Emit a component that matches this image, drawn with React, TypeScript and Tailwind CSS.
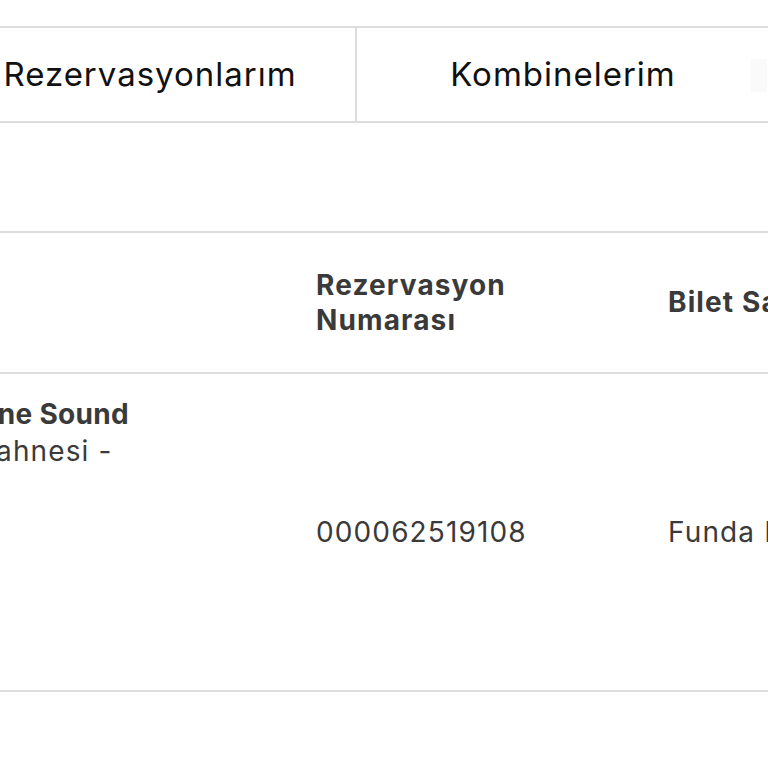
import React from "react";

export default function App() {
  return (
    <div className="w-[768px] h-[768px] overflow-hidden bg-white text-[#333]" style={{ fontFamily: "Inter, 'Noto Sans', sans-serif" }}>
      <div className="pt-[26px]">
        <div className="flex h-[97px] border-y-2 border-[#dcdcdc] -ml-[55px] w-[1300px]">
          <div className="w-[412px] shrink-0 border-r-2 border-[#dcdcdc] flex items-center justify-center text-[33px] tracking-[0.03em] text-[#111]">
            Rezervasyonlarım
          </div>
          <div className="w-[394px] shrink-0 flex items-center justify-center pl-[18px] text-[33px] tracking-[0.03em] text-[#111]">
            Kombinelerim
          </div>
          <div className="w-[412px] shrink-0 flex items-center pt-[2px]">
            <div className="w-[16px] h-[33px] bg-[#fafafa]" />
          </div>
        </div>
      </div>

      <div className="mt-[108px] border-t-2 border-[#dcdcdc] w-[1200px]">
        <div className="flex h-[141px] border-b-2 border-[#dcdcdc] font-bold text-[28px] tracking-[0.04em] leading-[35px] text-[#3a3a3a]">
          <div className="w-[300px] shrink-0" />
          <div className="w-[352px] shrink-0 pl-[16px] flex items-center">
            <div>
              Rezervasyon
              <br />
              Numarası
            </div>
          </div>
          <div className="w-[300px] shrink-0 pl-[16px] flex items-center whitespace-nowrap">
            Bilet Sahibi
          </div>
        </div>
        <div className="flex h-[318px] border-b-2 border-[#dcdcdc] text-[28px] tracking-[0.04em] leading-[37px] text-[#3a3a3a]">
          <div className="w-[300px] shrink-0 pt-[22px] overflow-hidden">
            <div className="whitespace-nowrap">
              <div className="-ml-[24px] font-bold tracking-[0.01em]">One Sound</div>
              <div className="-ml-[23px]">Sahnesi -</div>
            </div>
          </div>
          <div className="w-[352px] shrink-0 pl-[16px] flex items-center">000062519108</div>
          <div className="w-[300px] shrink-0 pl-[16px] flex items-center whitespace-nowrap">Funda Işık</div>
        </div>
      </div>
    </div>
  );
}
